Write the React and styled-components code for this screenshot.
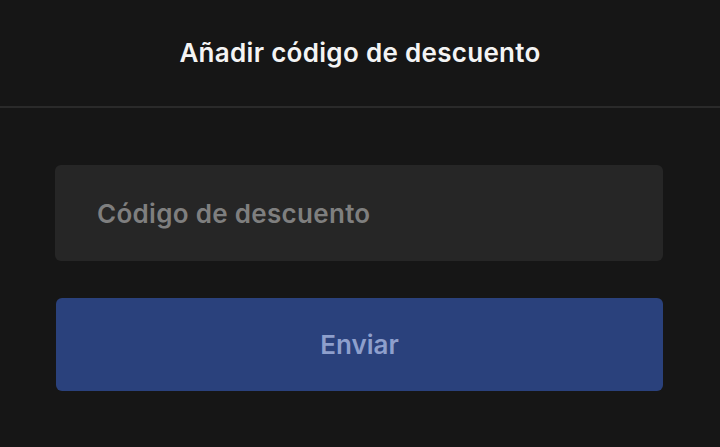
import React from "react";
import styled, { createGlobalStyle } from "styled-components";

const GlobalStyle = createGlobalStyle`
  html, body {
    margin: 0;
    padding: 0;
    background: #161616;
  }
  body {
    font-family: Inter, "Noto Sans", sans-serif;
  }
`;

const Page = styled.div`
  width: 720px;
  height: 447px;
  background: #161616;
  display: flex;
  flex-direction: column;
`;

const Header = styled.div`
  height: 108px;
  display: flex;
  align-items: center;
  justify-content: center;
  border-bottom: 2px solid #2a2a2a;
  box-sizing: border-box;
`;

const Title = styled.h1`
  margin: 0 0 1px;
  font-size: 26px;
  font-weight: 600;
  letter-spacing: 0.3px;
  color: #f4f4f4;
`;

const Form = styled.form`
  display: flex;
  flex-direction: column;
  gap: 37px;
  padding: 57px 57px 0 55px;
`;

const Input = styled.input`
  height: 96px;
  box-sizing: border-box;
  border: none;
  outline: none;
  border-radius: 6px;
  background: #262626;
  padding: 0 42px;
  font-family: Inter, "Noto Sans", sans-serif;
  font-size: 26px;
  font-weight: 600;
  letter-spacing: 0.3px;
  color: #fff;
  &::placeholder {
    color: #7f7f7f;
  }
`;

const Button = styled.button`
  height: 93px;
  margin-left: 1px;
  border: none;
  border-radius: 6px;
  background: #2a417c;
  color: #8e9fcc;
  font-family: Inter, "Noto Sans", sans-serif;
  font-size: 26px;
  font-weight: 600;
  cursor: pointer;
`;

export default function App() {
  return (
    <Page>
      <GlobalStyle />
      <Header>
        <Title>Añadir código de descuento</Title>
      </Header>
      <Form onSubmit={(e) => e.preventDefault()}>
        <Input placeholder="Código de descuento" />
        <Button type="submit">Enviar</Button>
      </Form>
    </Page>
  );
}
